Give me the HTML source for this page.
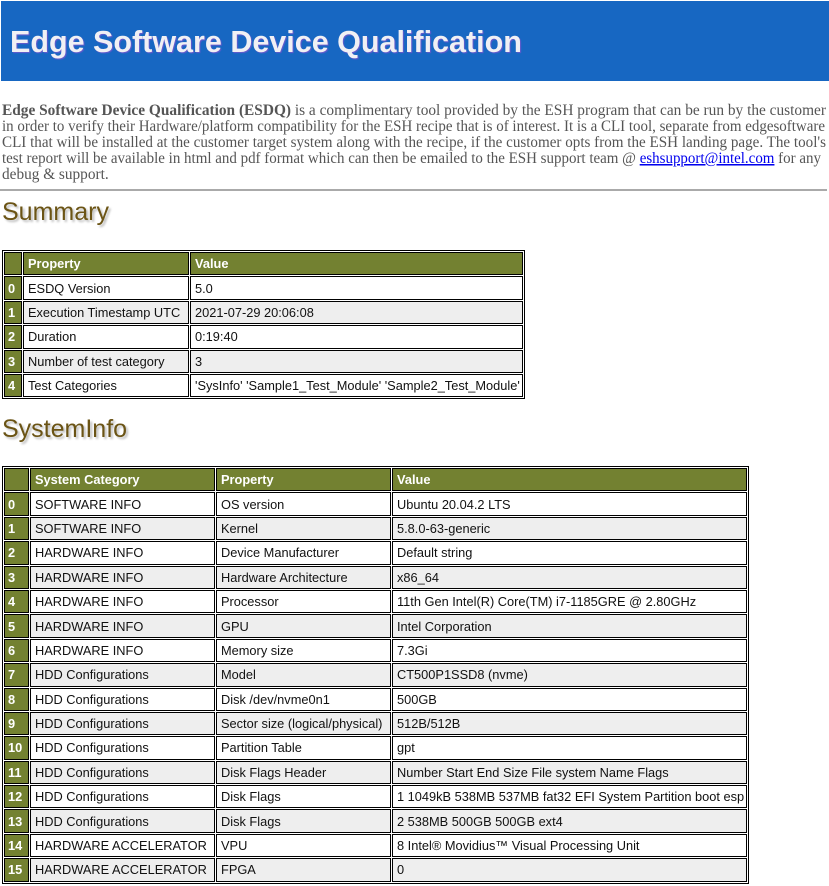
<!DOCTYPE html>
<html><head><meta charset="utf-8"><style>
body{margin:0;width:829px;height:886px;overflow:hidden;background:#fff;font-family:"Liberation Sans",Arial,sans-serif;}
.hdr{position:absolute;left:1px;top:1px;width:828px;height:80px;background:#1767c2;}
.hdr h1{margin:0;position:absolute;left:9px;top:24px;font-size:30.5px;font-weight:bold;color:#f0f0f4;text-shadow:1px 1px 1px #6a5acd;letter-spacing:0;}
svg.intro{position:absolute;left:0;top:98px;}
svg.intro text{font-family:"Liberation Serif","DejaVu Serif",serif;font-size:15.3px;fill:#555;}
hr{position:absolute;left:0;top:189px;width:827px;margin:0;border:0;border-top:2px solid #aaa;}
h2{position:absolute;margin:0;font-weight:normal;font-size:25px;color:#6b5415;text-shadow:2px 2px 2px #bbb;left:2px;}
table{position:absolute;left:2px;border:1px solid #000;border-spacing:1px;font-size:12.8px;table-layout:fixed;}
td,th{border:1px solid #000;padding:0 2px 0 4px;height:21.4px;text-align:left;white-space:nowrap;color:#111;overflow:hidden;}
th{background:#738131;color:#fff;font-weight:bold;}
td.i{background:#738131;color:#fff;font-weight:bold;padding:0 3px;}
tr.a td{background:#fff}
tr.b td{background:#eee}
tr.a td.i,tr.b td.i{background:#738131;}
</style></head><body>
<div class="hdr"><h1>Edge Software Device Qualification</h1></div>
<svg class="intro" width="829" height="90">
<text x="2" y="17" textLength="824" lengthAdjust="spacingAndGlyphs"><tspan font-weight="bold">Edge Software Device Qualification (ESDQ)</tspan> is a complimentary tool provided by the ESH program that can be run by the customer</text>
<text x="2" y="33" textLength="823" lengthAdjust="spacingAndGlyphs">in order to verify their Hardware/platform compatibility for the ESH recipe that is of interest. It is a CLI tool, separate from edgesoftware</text>
<text x="2" y="49" textLength="824" lengthAdjust="spacingAndGlyphs">CLI that will be installed at the customer target system along with the recipe, if the customer opts from the ESH landing page. The tool's</text>
<text x="2" y="65" textLength="819" lengthAdjust="spacingAndGlyphs">test report will be available in html and pdf format which can then be emailed to the ESH support team @ <tspan fill="#00e" text-decoration="underline">eshsupport@intel.com</tspan> for any</text>
<text x="2" y="81">debug &amp; support.</text>
</svg>
<hr>
<h2 style="top:198px">Summary</h2>
<table style="top:250px;width:523px">
<tr><th style="width:14px;padding:0 1px"></th><th style="width:158px">Property</th><th>Value</th></tr>
<tr class="a"><td class="i">0</td><td>ESDQ Version</td><td>5.0</td></tr>
<tr class="b"><td class="i">1</td><td>Execution Timestamp UTC</td><td>2021-07-29 20:06:08</td></tr>
<tr class="a"><td class="i">2</td><td>Duration</td><td>0:19:40</td></tr>
<tr class="b"><td class="i">3</td><td>Number of test category</td><td>3</td></tr>
<tr class="a"><td class="i">4</td><td>Test Categories</td><td>'SysInfo' 'Sample1_Test_Module' 'Sample2_Test_Module'</td></tr>
</table>
<h2 style="top:415px">SystemInfo</h2>
<table style="top:466px;width:747px">
<tr><th style="width:21px;padding:0 1px"></th><th style="width:177px">System Category</th><th style="width:167px">Property</th><th>Value</th></tr>
<tr class="a"><td class="i">0</td><td>SOFTWARE INFO</td><td>OS version</td><td>Ubuntu 20.04.2 LTS</td></tr>
<tr class="b"><td class="i">1</td><td>SOFTWARE INFO</td><td>Kernel</td><td>5.8.0-63-generic</td></tr>
<tr class="a"><td class="i">2</td><td>HARDWARE INFO</td><td>Device Manufacturer</td><td>Default string</td></tr>
<tr class="b"><td class="i">3</td><td>HARDWARE INFO</td><td>Hardware Architecture</td><td>x86_64</td></tr>
<tr class="a"><td class="i">4</td><td>HARDWARE INFO</td><td>Processor</td><td>11th Gen Intel(R) Core(TM) i7-1185GRE @ 2.80GHz</td></tr>
<tr class="b"><td class="i">5</td><td>HARDWARE INFO</td><td>GPU</td><td>Intel Corporation</td></tr>
<tr class="a"><td class="i">6</td><td>HARDWARE INFO</td><td>Memory size</td><td>7.3Gi</td></tr>
<tr class="b"><td class="i">7</td><td>HDD Configurations</td><td>Model</td><td>CT500P1SSD8 (nvme)</td></tr>
<tr class="a"><td class="i">8</td><td>HDD Configurations</td><td>Disk /dev/nvme0n1</td><td>500GB</td></tr>
<tr class="b"><td class="i">9</td><td>HDD Configurations</td><td>Sector size (logical/physical)</td><td>512B/512B</td></tr>
<tr class="a"><td class="i">10</td><td>HDD Configurations</td><td>Partition Table</td><td>gpt</td></tr>
<tr class="b"><td class="i">11</td><td>HDD Configurations</td><td>Disk Flags Header</td><td>Number Start End Size File system Name Flags</td></tr>
<tr class="a"><td class="i">12</td><td>HDD Configurations</td><td>Disk Flags</td><td>1 1049kB 538MB 537MB fat32 EFI System Partition boot esp</td></tr>
<tr class="b"><td class="i">13</td><td>HDD Configurations</td><td>Disk Flags</td><td>2 538MB 500GB 500GB ext4</td></tr>
<tr class="a"><td class="i">14</td><td>HARDWARE ACCELERATOR</td><td>VPU</td><td>8 Intel® Movidius™ Visual Processing Unit</td></tr>
<tr class="b"><td class="i">15</td><td>HARDWARE ACCELERATOR</td><td>FPGA</td><td>0</td></tr>
</table>
</body></html>
